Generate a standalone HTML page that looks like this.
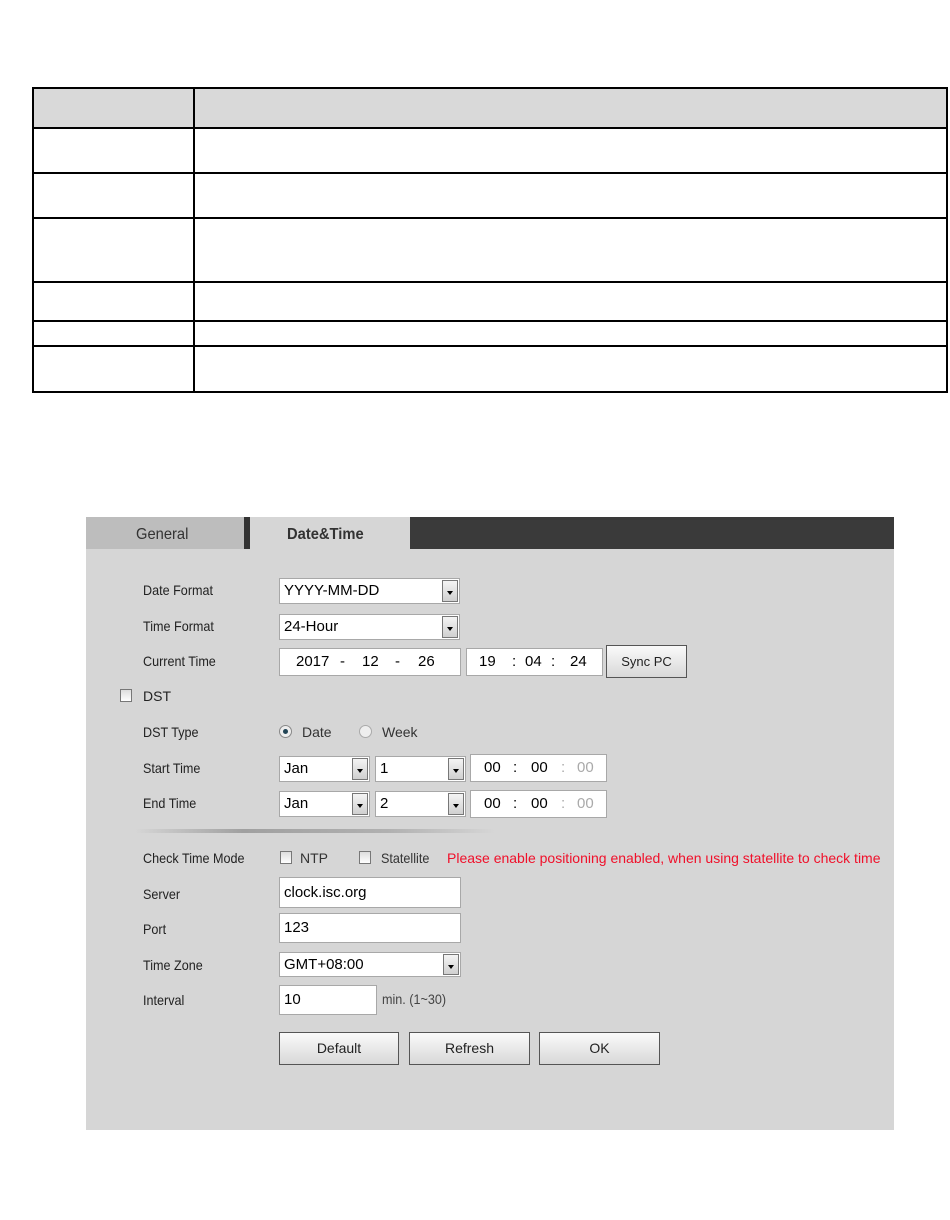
<!DOCTYPE html>
<html><head><meta charset="utf-8"><style>
*{box-sizing:border-box;margin:0;padding:0}
body{width:950px;height:1220px;background:#fff;position:relative;font-family:"Liberation Sans",Arial,sans-serif;overflow:hidden}
.a{position:absolute}
.hl{position:absolute;left:33px;width:915px;height:2px;background:#000}
.lbl{position:absolute;left:143px;font-size:14px;color:#222;transform:scaleX(.9);transform-origin:left}
.box{position:absolute;background:#fff;border:1px solid #a8a8a8;font-size:15px;color:#000;padding-left:4px;line-height:26px}
.dd{position:absolute;right:1px;top:1px;bottom:1px;width:16px;background:linear-gradient(#f4f4f4,#d0d0d0);border:1px solid #777}
.dd:after{content:"";position:absolute;left:4px;top:10px;border-left:3px solid transparent;border-right:3px solid transparent;border-top:4px solid #000}
.cb{position:absolute;width:12px;height:13px;border:1px solid #777;background:linear-gradient(#ddd,#fff)}
.btn{position:absolute;height:33px;border:1px solid #555;background:linear-gradient(#fafafa,#d8d8d8);font-size:14px;text-align:center;line-height:31px;color:#222}
.t{position:absolute;font-size:15px}
</style></head><body>
<div class="a" style="left:33px;top:88px;width:915px;height:40px;background:#d9d9d9"></div>
<div class="hl" style="top:87px"></div>
<div class="hl" style="top:127px"></div>
<div class="hl" style="top:172px"></div>
<div class="hl" style="top:217px"></div>
<div class="hl" style="top:281px"></div>
<div class="hl" style="top:320px"></div>
<div class="hl" style="top:345px"></div>
<div class="hl" style="top:391px"></div>
<div class="a" style="left:32px;top:87px;width:2px;height:306px;background:#000"></div>
<div class="a" style="left:193px;top:87px;width:2px;height:306px;background:#000"></div>
<div class="a" style="left:946px;top:87px;width:2px;height:306px;background:#000"></div>

<div class="a" style="left:86px;top:517px;width:808px;height:613px;background:#d6d6d6"></div>
<div class="a" style="left:86px;top:517px;width:158px;height:32px;background:#bdbdbd"></div>
<div class="a" style="left:244px;top:517px;width:6px;height:32px;background:#333"></div>
<div class="a" style="left:410px;top:517px;width:484px;height:32px;background:#3a3a3a"></div>
<div class="a" style="left:136px;top:526px;font-size:16px;color:#333;transform:scaleX(.92);transform-origin:left">General</div>
<div class="a" style="left:287px;top:526px;font-size:16px;font-weight:bold;color:#333;transform:scaleX(.92);transform-origin:left">Date&amp;Time</div>

<div class="lbl" style="top:582px">Date Format</div>
<div class="box" style="left:279px;top:578px;width:181px;height:26px;line-height:24px">YYYY-MM-DD<div class="dd"></div></div>
<div class="lbl" style="top:618px">Time Format</div>
<div class="box" style="left:279px;top:614px;width:181px;height:26px;line-height:24px">24-Hour<div class="dd"></div></div>
<div class="lbl" style="top:653px">Current Time</div>
<div class="box" style="left:279px;top:648px;width:182px;height:28px"></div>
<div class="t" style="left:296px;top:653px">2017</div><div class="t" style="left:340px;top:653px">-</div>
<div class="t" style="left:362px;top:653px">12</div><div class="t" style="left:395px;top:653px">-</div>
<div class="t" style="left:418px;top:653px">26</div>
<div class="box" style="left:466px;top:648px;width:137px;height:28px"></div>
<div class="t" style="left:479px;top:653px">19</div><div class="t" style="left:512px;top:653px">:</div>
<div class="t" style="left:525px;top:653px">04</div><div class="t" style="left:551px;top:653px">:</div>
<div class="t" style="left:570px;top:653px">24</div>
<div class="btn" style="left:606px;top:645px;width:81px;height:33px;font-size:13px">Sync PC</div>
<div class="cb" style="left:120px;top:689px"></div>
<div class="a" style="left:143px;top:688px;font-size:14px;color:#222">DST</div>
<div class="lbl" style="top:724px">DST Type</div>
<div class="a" style="left:279px;top:725px;width:13px;height:13px;border-radius:50%;border:1px solid #888;background:#eee"><div style="margin:3px;width:5px;height:5px;border-radius:50%;background:#245"></div></div>
<div class="a" style="left:302px;top:724px;font-size:14px;color:#333">Date</div>
<div class="a" style="left:359px;top:725px;width:13px;height:13px;border-radius:50%;border:1px solid #aaa;background:#eee"></div>
<div class="a" style="left:382px;top:724px;font-size:14px;color:#333">Week</div>

<div class="lbl" style="top:760px">Start Time</div>
<div class="box" style="left:279px;top:756px;width:91px;height:26px;line-height:24px">Jan<div class="dd"></div></div>
<div class="box" style="left:375px;top:756px;width:91px;height:26px;line-height:24px">1<div class="dd"></div></div>
<div class="box" style="left:470px;top:754px;width:137px;height:28px"></div>
<div class="t" style="left:484px;top:759px">00</div><div class="t" style="left:513px;top:759px">:</div><div class="t" style="left:531px;top:759px">00</div><div class="t" style="left:561px;top:759px;color:#aaa">:</div><div class="t" style="left:577px;top:759px;color:#aaa">00</div>
<div class="lbl" style="top:795px">End Time</div>
<div class="box" style="left:279px;top:791px;width:91px;height:26px;line-height:24px">Jan<div class="dd"></div></div>
<div class="box" style="left:375px;top:791px;width:91px;height:26px;line-height:24px">2<div class="dd"></div></div>
<div class="box" style="left:470px;top:790px;width:137px;height:28px"></div>
<div class="t" style="left:484px;top:795px">00</div><div class="t" style="left:513px;top:795px">:</div><div class="t" style="left:531px;top:795px">00</div><div class="t" style="left:561px;top:795px;color:#aaa">:</div><div class="t" style="left:577px;top:795px;color:#aaa">00</div>

<div class="a" style="left:135px;top:829px;width:360px;height:4px;background:linear-gradient(90deg,#d6d6d6,#a0a0a0 30%,#b0b0b0 70%,#d6d6d6)"></div>

<div class="lbl" style="top:850px">Check Time Mode</div>
<div class="cb" style="left:280px;top:851px"></div>
<div class="a" style="left:300px;top:850px;font-size:14px;color:#333">NTP</div>
<div class="cb" style="left:359px;top:851px"></div>
<div class="a" style="left:381px;top:850px;font-size:14px;color:#333;transform:scaleX(.9);transform-origin:left">Statellite</div>
<div class="a" style="left:447px;top:850px;font-size:14px;color:#f0102a;white-space:nowrap;transform:scaleX(1.0);transform-origin:left">Please enable positioning enabled, when using statellite to check time</div>

<div class="lbl" style="top:886px">Server</div>
<div class="box" style="left:279px;top:877px;width:182px;height:31px;line-height:29px">clock.isc.org</div>
<div class="lbl" style="top:921px">Port</div>
<div class="box" style="left:279px;top:913px;width:182px;height:30px;line-height:28px">123</div>
<div class="lbl" style="top:957px">Time Zone</div>
<div class="box" style="left:279px;top:952px;width:182px;height:25px;line-height:23px">GMT+08:00<div class="dd"></div></div>
<div class="lbl" style="top:992px">Interval</div>
<div class="box" style="left:279px;top:985px;width:98px;height:30px;line-height:28px">10</div>
<div class="a" style="left:382px;top:991px;font-size:14px;color:#444;transform:scaleX(.9);transform-origin:left">min. (1~30)</div>

<div class="btn" style="left:279px;top:1032px;width:120px">Default</div>
<div class="btn" style="left:409px;top:1032px;width:121px">Refresh</div>
<div class="btn" style="left:539px;top:1032px;width:121px">OK</div>
</body></html>
